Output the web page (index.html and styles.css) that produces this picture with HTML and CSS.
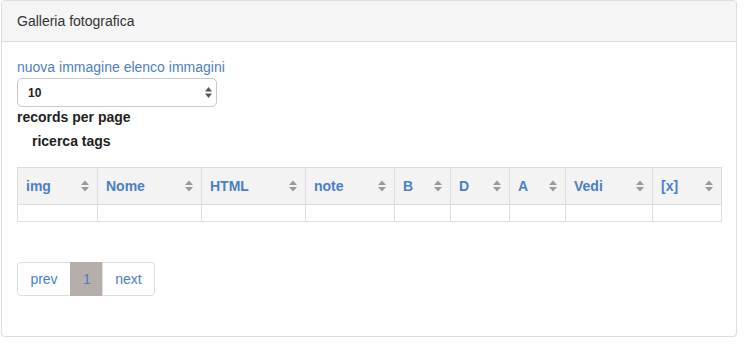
FILE: index.html
```html
<!DOCTYPE html>
<html lang="it">
<head>
  <meta charset="UTF-8">
  <title>Galleria fotografica</title>
  <link rel="stylesheet" href="styles.css">
</head>
<body>

  <div class="panel">
    <div class="panel-heading">Galleria fotografica</div>

    <div class="panel-body">
      <div class="links">
        <a href="#">nuova immagine</a> <a href="#">elenco immagini</a>
      </div>

      <div class="select-wrap">
        <select class="per-page">
          <option>10</option>
          <option>25</option>
          <option>50</option>
        </select>
        <svg class="select-arrows" width="7" height="11" viewBox="0 0 7 11">
          <polygon points="0,4.5 3.5,0 7,4.5" fill="#555"/>
          <polygon points="0,6.5 3.5,11 7,6.5" fill="#555"/>
        </svg>
      </div>
      <div class="records-label">records per page</div>

      <div class="tags-label">ricerca tags</div>

      <table class="grid">
        <colgroup>
          <col style="width: 80px">
          <col style="width: 104px">
          <col style="width: 104px">
          <col style="width: 89px">
          <col style="width: 56px">
          <col style="width: 59px">
          <col style="width: 56px">
          <col style="width: 87px">
          <col style="width: 69px">
        </colgroup>
        <thead>
          <tr id="headRow"></tr>
        </thead>
        <tbody>
          <tr id="emptyRow"></tr>
        </tbody>
      </table>

      <ul class="pagination">
        <li class="prev"><a href="#">prev</a></li>
        <li class="active"><a href="#">1</a></li>
        <li class="next"><a href="#">next</a></li>
      </ul>
    </div>
  </div>

  <script>
    const colonne = ['img', 'Nome', 'HTML', 'note', 'B', 'D', 'A', 'Vedi', '[x]'];
    const headRow = document.getElementById('headRow');
    const emptyRow = document.getElementById('emptyRow');

    const iconaSort = '<svg class="sort" width="8" height="12" viewBox="0 0 8 12">' +
      '<polygon points="0,5 4,0.5 8,5" fill="#9a9a9a"/>' +
      '<polygon points="0,7 4,11.5 8,7" fill="#9a9a9a"/></svg>';

    colonne.forEach(nome => {
      const th = document.createElement('th');
      th.innerHTML = '<span class="th-inner"><span class="th-text"></span>' + iconaSort + '</span>';
      th.querySelector('.th-text').textContent = nome;
      headRow.appendChild(th);

      emptyRow.appendChild(document.createElement('td'));
    });
  </script>
</body>
</html>
```

FILE: styles.css
```css
* { box-sizing: border-box; }

body {
  margin: 0;
  font-family: 'Liberation Sans', Arial, sans-serif;
  font-size: 14px;
  line-height: 20px;
  color: #333;
  background: #fff;
}

a {
  color: #4a7fc6;
  text-decoration: none;
}

.panel {
  width: 736px;
  margin-left: 1px;
  border: 1px solid #ddd;
  border-radius: 4px;
  box-shadow: 0 1px 1px rgba(0, 0, 0, 0.05);
}

.panel-heading {
  padding: 10px 15px;
  background-color: #f5f5f5;
  border-bottom: 1px solid #ddd;
  border-radius: 3px 3px 0 0;
  color: #333;
}

.panel-body {
  padding: 15px 15px 20px;
}

.select-wrap {
  position: relative;
  width: 200px;
  height: 29px;
  margin-top: 1px;
}

.per-page {
  appearance: none;
  -webkit-appearance: none;
  width: 200px;
  height: 29px;
  padding: 0 10px;
  border: 1px solid #c8c8c8;
  border-radius: 5px;
  background: #fff;
  font-family: inherit;
  font-size: 12px;
  font-weight: bold;
  color: #222;
}

.select-arrows {
  position: absolute;
  right: 5px;
  top: 9px;
  pointer-events: none;
}

.records-label {
  font-weight: bold;
  color: #222;
}

.tags-label {
  margin-top: 4px;
  padding-left: 15px;
  font-weight: bold;
  color: #222;
}

.grid {
  width: 100%;
  margin-top: 16px;
  border-collapse: collapse;
  table-layout: fixed;
  border: 1px solid #ddd;
}

.grid th,
.grid td {
  border: 1px solid #ddd;
  padding: 8px;
  text-align: left;
}

.grid th {
  background-color: #f3f3f3;
  color: #4a7fc6;
  font-weight: bold;
}

.th-inner {
  display: flex;
  align-items: center;
  justify-content: space-between;
}

.sort {
  flex-shrink: 0;
}

.pagination {
  display: flex;
  list-style: none;
  margin: 40px 0 20px;
  padding: 0;
}

.pagination li a {
  display: block;
  padding: 6px 12px;
  border: 1px solid #ddd;
  margin-left: -1px;
  color: #4a7fc6;
  background: #fff;
  text-align: center;
}

.pagination li.prev a {
  margin-left: 0;
  width: 54px;
  border-radius: 4px 0 0 4px;
}

.pagination li.active a {
  width: 33px;
  background-color: #b5aeab;
  border-color: #b5aeab;
}

.pagination li.next a {
  width: 53px;
  border-radius: 0 4px 4px 0;
}
```
